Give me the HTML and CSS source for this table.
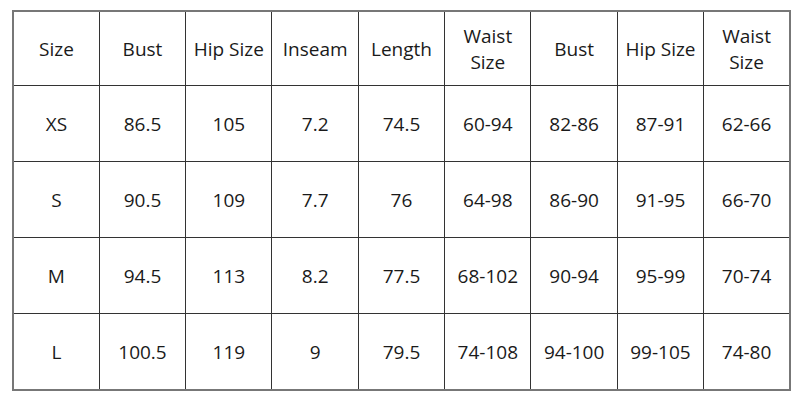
FILE: index.html
```html
<!DOCTYPE html>
<html>
<head>
<meta charset="utf-8">
<link rel="stylesheet" href="styles.css">
</head>
<body>
<table class="size-table">
  <tr class="head">
    <td>Size</td><td>Bust</td><td>Hip Size</td><td>Inseam</td><td>Length</td><td>Waist<br>Size</td><td>Bust</td><td>Hip Size</td><td>Waist<br>Size</td>
  </tr>
  <tr>
    <td>XS</td><td>86.5</td><td>105</td><td>7.2</td><td>74.5</td><td>60-94</td><td>82-86</td><td>87-91</td><td>62-66</td>
  </tr>
  <tr>
    <td>S</td><td>90.5</td><td>109</td><td>7.7</td><td>76</td><td>64-98</td><td>86-90</td><td>91-95</td><td>66-70</td>
  </tr>
  <tr>
    <td>M</td><td>94.5</td><td>113</td><td>8.2</td><td>77.5</td><td>68-102</td><td>90-94</td><td>95-99</td><td>70-74</td>
  </tr>
  <tr>
    <td>L</td><td>100.5</td><td>119</td><td>9</td><td>79.5</td><td>74-108</td><td>94-100</td><td>99-105</td><td>74-80</td>
  </tr>
</table>
</body>
</html>
```
FILE: styles.css
```css
html, body {
  margin: 0;
  padding: 0;
  background: #ffffff;
}
body {
  padding: 10px 0 0 12px;
}
.size-table {
  border-collapse: collapse;
  table-layout: fixed;
  width: 779px;
  font-family: "Open Sans", "Noto Sans", sans-serif;
  font-size: 19px;
  color: #1a1a1a;
  border: 2px solid #777;
}
.size-table td {
  border: 1px solid #333;
  text-align: center;
  vertical-align: middle;
  padding: 0;
  height: 75px;
  line-height: 26px;
}
.size-table .head td {
  height: 73px;
}
```
